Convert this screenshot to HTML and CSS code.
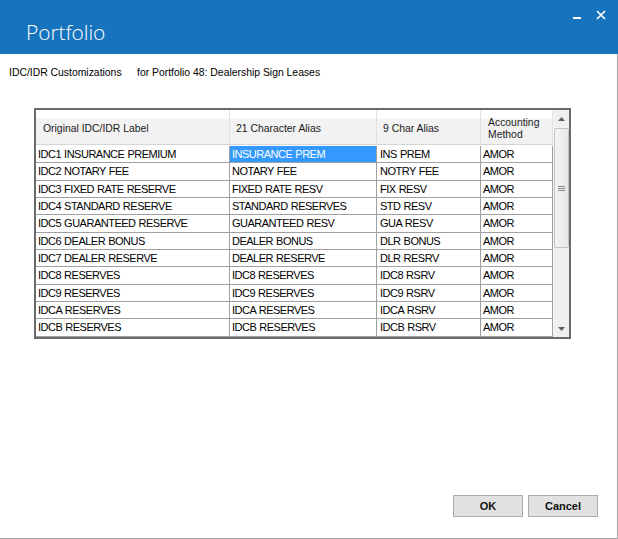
FILE: index.html
```html
<!DOCTYPE html>
<html>
<head>
<meta charset="utf-8">
<link rel="stylesheet" href="styles.css">
</head>
<body>
<div class="window">
  <header class="titlebar">
    <h1 class="title">Portfolio</h1>
    <div class="controls">
      <svg class="ctl" width="12" height="12" viewBox="0 0 12 12"><rect x="2" y="8" width="8" height="2" fill="#fff"/></svg>
      <svg class="ctl" width="12" height="12" viewBox="0 0 12 12"><path d="M2 2 L10 10 M10 2 L2 10" stroke="#fff" stroke-width="1.7" fill="none"/></svg>
    </div>
  </header>
  <main class="content">
    <div class="subtitle">
      <span class="sub-label">IDC/IDR Customizations</span>
      <span>for Portfolio 48: Dealership Sign Leases</span>
    </div>
    <div class="grid-frame">
      <div class="grid-body">
        <div class="grid-head">
          <div class="hcell">Original IDC/IDR Label</div>
          <div class="hcell">21 Character Alias</div>
          <div class="hcell">9 Char Alias</div>
          <div class="hcell hcell-wrap">Accounting<br>Method</div>
        </div>
        <div class="rows">
          <div class="row"><div class="cell">IDC1 INSURANCE PREMIUM</div><div class="cell selected">INSURANCE PREM</div><div class="cell">INS PREM</div><div class="cell">AMOR</div></div>
          <div class="row"><div class="cell">IDC2 NOTARY FEE</div><div class="cell">NOTARY FEE</div><div class="cell">NOTRY FEE</div><div class="cell">AMOR</div></div>
          <div class="row"><div class="cell">IDC3 FIXED RATE RESERVE</div><div class="cell">FIXED RATE RESV</div><div class="cell">FIX RESV</div><div class="cell">AMOR</div></div>
          <div class="row"><div class="cell">IDC4 STANDARD RESERVE</div><div class="cell">STANDARD RESERVES</div><div class="cell">STD RESV</div><div class="cell">AMOR</div></div>
          <div class="row"><div class="cell">IDC5 GUARANTEED RESERVE</div><div class="cell">GUARANTEED RESV</div><div class="cell">GUA RESV</div><div class="cell">AMOR</div></div>
          <div class="row"><div class="cell">IDC6 DEALER BONUS</div><div class="cell">DEALER BONUS</div><div class="cell">DLR BONUS</div><div class="cell">AMOR</div></div>
          <div class="row"><div class="cell">IDC7 DEALER RESERVE</div><div class="cell">DEALER RESERVE</div><div class="cell">DLR RESRV</div><div class="cell">AMOR</div></div>
          <div class="row"><div class="cell">IDC8 RESERVES</div><div class="cell">IDC8 RESERVES</div><div class="cell">IDC8 RSRV</div><div class="cell">AMOR</div></div>
          <div class="row"><div class="cell">IDC9 RESERVES</div><div class="cell">IDC9 RESERVES</div><div class="cell">IDC9 RSRV</div><div class="cell">AMOR</div></div>
          <div class="row"><div class="cell">IDCA RESERVES</div><div class="cell">IDCA RESERVES</div><div class="cell">IDCA RSRV</div><div class="cell">AMOR</div></div>
          <div class="row"><div class="cell">IDCB RESERVES</div><div class="cell">IDCB RESERVES</div><div class="cell">IDCB RSRV</div><div class="cell">AMOR</div></div>
        </div>
      </div>
      <div class="scrollbar">
        <div class="sb-btn"><svg width="7" height="4" viewBox="0 0 7 4"><path d="M0 4 L3.5 0 L7 4 Z" fill="#606060"/></svg></div>
        <div class="sb-track">
          <div class="sb-thumb">
            <svg width="7" height="7" viewBox="0 0 7 7"><path d="M0 1.5 H7 M0 3.5 H7 M0 5.5 H7" stroke="#8a8a8a" stroke-width="1"/></svg>
          </div>
        </div>
        <div class="sb-btn"><svg width="7" height="4" viewBox="0 0 7 4"><path d="M0 0 L3.5 4 L7 0 Z" fill="#606060"/></svg></div>
      </div>
    </div>
    <div class="buttons">
      <button class="btn">OK</button>
      <button class="btn">Cancel</button>
    </div>
  </main>
</div>
</body>
</html>
```
FILE: styles.css
```css
* { box-sizing: border-box; }
html, body { margin: 0; padding: 0; background: #fff; }
body { width: 618px; height: 539px; overflow: hidden; font-family: "Liberation Sans", Arial, sans-serif; color: #000; }

.window { width: 618px; height: 539px; display: flex; flex-direction: column; }

.titlebar {
  height: 54px;
  background: #1673bd;
  display: flex;
  justify-content: space-between;
  align-items: flex-start;
  flex: none;
}
.title {
  margin: 19px 0 0 26px;
  font-family: "Open Sans", "Liberation Sans", sans-serif;
  font-weight: 300;
  font-size: 21px;
  line-height: 26px;
  color: #fff;
  letter-spacing: -0.1px;
}
.controls { display: flex; gap: 12px; margin: 9px 11px 0 0; }
.ctl { display: block; }

.content {
  flex: 1;
  border-right: 1px solid #a8a8a8;
  border-bottom: 1px solid #a8a8a8;
  display: flex;
  flex-direction: column;
}

.subtitle {
  margin: 12px 0 0 9px;
  font-size: 10.4px;
  line-height: 14px;
  display: flex;
}
.sub-label { width: 128px; }

.grid-frame {
  margin: 28px 0 0 34px;
  width: 537px;
  height: 231px;
  border: 2px solid #6a6a6a;
  display: flex;
  background: #fff;
}
.grid-body { width: 517px; display: flex; flex-direction: column; overflow: hidden; }

.grid-head {
  height: 35px;
  display: grid;
  grid-template-columns: 194px 147px 104px 72px;
  border-bottom: 1px solid #d6d6d6;
  background: linear-gradient(to bottom, #ffffff 0, #ffffff 8px, #f3f3f3 9px, #f1f1f1 100%);
}
.hcell {
  display: flex;
  align-items: center;
  padding-left: 6px;
  padding-top: 3px;
  font-size: 10.4px;
  line-height: 12px;
  border-right: 1px solid #e2e2e2;
  color: #1a1a1a;
}
.hcell:first-child { padding-left: 7px; }
.hcell-wrap { padding-left: 7px; padding-top: 4px; }

.rows { margin-top: 1px; display: flex; flex-direction: column; }
.row {
  display: grid;
  grid-template-columns: 194px 147px 104px 72px;
  height: 17.33px;
  flex: none;
}
.cell {
  border-right: 1px solid #a0a0a0;
  border-bottom: 1px solid #a0a0a0;
  padding-left: 2px;
  padding-top: 1px;
  font-size: 11px;
  letter-spacing: -0.5px;
  word-spacing: 0.5px;
  line-height: 15px;
  white-space: nowrap;
  overflow: hidden;
}
.cell:nth-child(3) { padding-left: 3px; }
.selected { background: #3399ff; color: #fff; }

.scrollbar {
  width: 16px;
  display: flex;
  flex-direction: column;
  background: #f0f0f0;
  border-left: 1px solid #f7f7f7;
}
.sb-btn { height: 17px; display: flex; align-items: center; justify-content: center; flex: none; }
.sb-btn svg { display: block; }
.sb-track { flex: 1; }
.sb-thumb {
  margin: 1px 0 0 0;
  height: 120px;
  border: 1px solid #c4c4c4;
  border-radius: 2px;
  background: linear-gradient(to right, #f4f4f4, #e6e6e6);
  display: flex;
  align-items: center;
  justify-content: center;
}
.sb-thumb svg { display: block; }

.buttons {
  margin-top: auto;
  margin-bottom: 21px;
  padding-right: 19px;
  display: flex;
  justify-content: flex-end;
  gap: 5px;
}
.btn {
  width: 70px;
  height: 22px;
  background: #e1e1e1;
  border: 1px solid #adadad;
  font-family: "Liberation Sans", Arial, sans-serif;
  font-weight: bold;
  font-size: 11px;
  color: #111;
  padding: 0;
}
```
